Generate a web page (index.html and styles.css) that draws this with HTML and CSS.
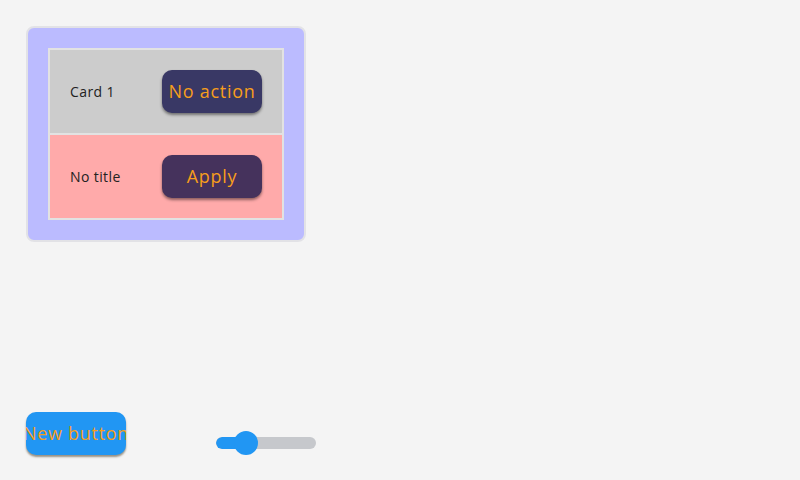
FILE: index.html
```html
<!DOCTYPE html>
<html>
<head>
<meta charset="utf-8">
<link rel="stylesheet" href="styles.css">
</head>
<body>
<div class="screen">
  <div class="panel">
    <div class="list">
      <div class="row row-gray">
        <span class="label">Card 1</span>
        <button class="btn btn-dark">No action</button>
      </div>
      <div class="row row-pink">
        <span class="label">No title</span>
        <button class="btn btn-plum">Apply</button>
      </div>
    </div>
  </div>
  <div class="bottom">
    <button class="btn btn-blue"><span>New button</span></button>
    <div class="slider">
      <div class="track">
        <div class="fill" style="width:30px"></div>
      </div>
      <div class="knob" style="left:18px"></div>
    </div>
  </div>
</div>
</body>
</html>
```
FILE: styles.css
```css
* { box-sizing: border-box; }
html, body { margin: 0; padding: 0; }
body {
  background: #f4f4f4;
  font-family: "Open Sans", "Liberation Sans", sans-serif;
}
.screen {
  width: 800px;
  height: 480px;
  padding: 26px 26px 25px 26px;
  display: flex;
  flex-direction: column;
  justify-content: space-between;
  align-items: flex-start;
}
.panel {
  width: 280px;
  height: 216px;
  background: #bbbbff;
  border: 2px solid #e2e2e6;
  border-radius: 8px;
  padding: 20px;
}
.list {
  width: 236px;
  height: 172px;
  border: 2px solid #e2e2e2;
  display: flex;
  flex-direction: column;
}
.row {
  display: flex;
  align-items: center;
  justify-content: space-between;
  padding: 0 20px;
}
.row-gray { height: 85px; background: #cccccc; border-bottom: 2px solid #e2e2e2; }
.row-pink { height: 83px; background: #ffaaaa; }
.label {
  font-size: 14px;
  color: #222;
  letter-spacing: 0.4px;
  margin-top: -1px;
}
.btn {
  width: 100px;
  height: 43px;
  border: none;
  border-radius: 10px;
  font-family: "Open Sans", "Liberation Sans", sans-serif;
  font-size: 18px;
  letter-spacing: 0.7px;
  color: #f79e1b;
  box-shadow: 0 2px 3px rgba(0, 0, 0, 0.45);
  padding: 0 0 1px 0;
  display: flex;
  align-items: center;
  justify-content: center;
  overflow: hidden;
  white-space: nowrap;
}
.btn-dark { background: #393865; }
.btn-plum { background: #45325c; }
.btn-blue { background: #2196f3; box-shadow: 0 2px 2px rgba(90, 80, 60, 0.6); }
.bottom {
  display: flex;
  align-items: flex-start;
  gap: 90px;
}
.slider {
  position: relative;
  width: 100px;
  height: 24px;
  margin-top: 19px;
  display: flex;
  align-items: center;
}
.track {
  width: 100px;
  height: 12px;
  border-radius: 6px;
  background: #c6c8cc;
  overflow: hidden;
}
.fill {
  height: 100%;
  background: #2196f3;
  border-radius: 6px;
}
.knob {
  position: absolute;
  top: 0;
  width: 24px;
  height: 24px;
  border-radius: 50%;
  background: #2196f3;
}
```
